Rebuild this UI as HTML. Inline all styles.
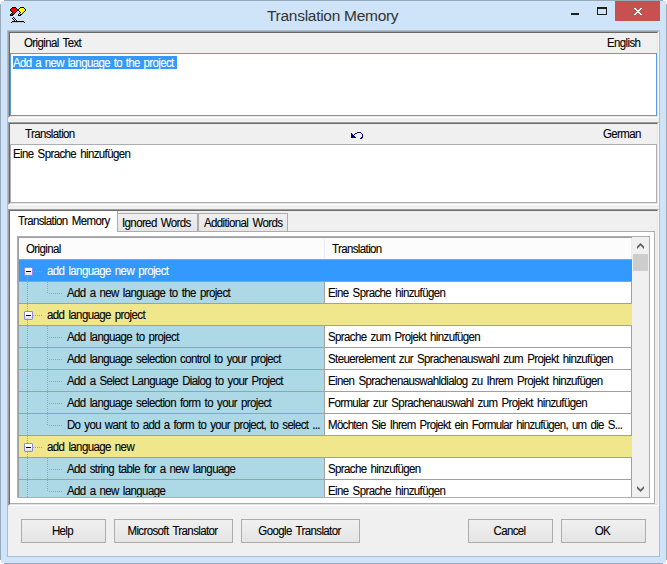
<!DOCTYPE html>
<html><head><meta charset="utf-8">
<style>
*{margin:0;padding:0;box-sizing:border-box}
html,body{width:667px;height:564px;overflow:hidden;background:#fff}
body{position:relative;font-family:"Liberation Sans",sans-serif;font-size:11.5px;color:#000;letter-spacing:-0.62px;word-spacing:1.5px;-webkit-text-stroke:0.1px currentColor}
.a{position:absolute}
.t{position:absolute;white-space:nowrap;line-height:13px;transform:scaleY(1.08);transform-origin:0 10.4px}
.sunk{position:absolute;border-top:1px solid #a0a0a0;border-left:1px solid #a0a0a0;border-bottom:1px solid #fff;border-right:1px solid #fff}
.sunk>.in{position:absolute;left:0;top:0;right:0;bottom:0;border-top:1px solid #696969;border-left:1px solid #696969;border-bottom:1px solid #e3e3e3;border-right:1px solid #e3e3e3}
.btn{position:absolute;top:519px;height:24px;border:1px solid #acacac;background:linear-gradient(#f0f0f0,#e5e5e5);text-align:center;line-height:22px;padding-right:2px}
.btn span{display:inline-block;transform:scaleY(1.08);transform-origin:0 75%}
.gl{height:1px;background:#a0a0a0}
.dv{width:1px;background:repeating-linear-gradient(#a0a0a0 0 1px,transparent 1px 2px)}
.dh{height:1px;background:repeating-linear-gradient(90deg,#a0a0a0 0 1px,transparent 1px 2px)}
.box{width:9px;height:9px;border:1px solid #8a8ade;border-radius:1px;background:linear-gradient(#fff 30%,#dcdcdc)}
.box i{position:absolute;left:1px;top:3px;width:5px;height:1px;background:#000}
</style></head><body>
<!-- window frame -->
<div class="a" style="left:1px;top:1px;width:665px;height:562px;background:#cfe4f8"></div>
<div class="a" style="left:4px;top:0;width:659px;height:1px;background:#98aab9"></div>
<div class="a" style="left:4px;top:563px;width:659px;height:1px;background:#98aab9"></div>
<div class="a" style="left:0;top:4px;width:1px;height:556px;background:#98aab9"></div>
<div class="a" style="left:666px;top:4px;width:1px;height:556px;background:#98aab9"></div>
<div class="a" style="left:7px;top:30px;width:653px;height:527px;border:1px solid #a9bed3"></div>
<div class="a" style="left:8px;top:31px;width:651px;height:525px;background:#f0f0f0"></div>

<!-- title bar -->
<svg class="a" style="left:8px;top:5px" width="20" height="20" shape-rendering="crispEdges"><rect x="4" y="2" width="4" height="1" fill="#000"/><rect x="12" y="2" width="4" height="1" fill="#000"/><rect x="3" y="3" width="1" height="1" fill="#000"/><rect x="4" y="3" width="4" height="1" fill="#f00"/><rect x="8" y="3" width="1" height="1" fill="#000"/><rect x="11" y="3" width="1" height="1" fill="#000"/><rect x="12" y="3" width="4" height="1" fill="#ff0"/><rect x="16" y="3" width="1" height="1" fill="#000"/><rect x="2" y="4" width="1" height="1" fill="#000"/><rect x="3" y="4" width="6" height="1" fill="#f00"/><rect x="9" y="4" width="2" height="1" fill="#000"/><rect x="11" y="4" width="6" height="1" fill="#ff0"/><rect x="17" y="4" width="1" height="1" fill="#000"/><rect x="2" y="5" width="1" height="1" fill="#000"/><rect x="3" y="5" width="6" height="1" fill="#f00"/><rect x="9" y="5" width="2" height="1" fill="#000"/><rect x="11" y="5" width="6" height="1" fill="#ff0"/><rect x="17" y="5" width="1" height="1" fill="#000"/><rect x="3" y="6" width="1" height="1" fill="#000"/><rect x="4" y="6" width="4" height="1" fill="#f00"/><rect x="8" y="6" width="1" height="1" fill="#000"/><rect x="11" y="6" width="1" height="1" fill="#000"/><rect x="12" y="6" width="4" height="1" fill="#ff0"/><rect x="16" y="6" width="1" height="1" fill="#000"/><rect x="4" y="7" width="1" height="1" fill="#000"/><rect x="5" y="7" width="2" height="1" fill="#f00"/><rect x="7" y="7" width="1" height="1" fill="#000"/><rect x="12" y="7" width="1" height="1" fill="#000"/><rect x="13" y="7" width="2" height="1" fill="#ff0"/><rect x="15" y="7" width="1" height="1" fill="#000"/><rect x="3" y="8" width="1" height="1" fill="#000"/><rect x="4" y="8" width="2" height="1" fill="#f00"/><rect x="6" y="8" width="1" height="1" fill="#000"/><rect x="11" y="8" width="1" height="1" fill="#000"/><rect x="12" y="8" width="2" height="1" fill="#ff0"/><rect x="14" y="8" width="1" height="1" fill="#000"/><rect x="2" y="9" width="1" height="1" fill="#000"/><rect x="3" y="9" width="1" height="1" fill="#f00"/><rect x="4" y="9" width="2" height="1" fill="#000"/><rect x="10" y="9" width="1" height="1" fill="#000"/><rect x="11" y="9" width="1" height="1" fill="#ff0"/><rect x="12" y="9" width="2" height="1" fill="#000"/><rect x="2" y="10" width="3" height="1" fill="#000"/><rect x="10" y="10" width="3" height="1" fill="#000"/><rect x="5" y="12" width="1" height="1" fill="#000"/><rect x="4" y="13" width="1" height="1" fill="#000"/><rect x="5" y="13" width="1" height="1" fill="#fff"/><rect x="6" y="13" width="1" height="1" fill="#000"/><rect x="5" y="14" width="1" height="1" fill="#000"/><rect x="6" y="14" width="1" height="1" fill="#fff"/><rect x="7" y="14" width="1" height="1" fill="#000"/><rect x="6" y="15" width="1" height="1" fill="#000"/><rect x="7" y="15" width="1" height="1" fill="#fff"/><rect x="8" y="15" width="1" height="1" fill="#000"/><rect x="4" y="16" width="12" height="1" fill="#000"/><rect x="3" y="17" width="1" height="1" fill="#000"/><rect x="4" y="17" width="12" height="1" fill="#c8c8c8"/><rect x="16" y="17" width="1" height="1" fill="#000"/></svg>
<div class="t" style="left:267px;top:6px;font-size:15.5px;line-height:20px;color:#333;letter-spacing:-0.28px;word-spacing:0;-webkit-text-stroke:0;transform:none">Translation Memory</div>
<div class="a" style="left:571px;top:13px;width:8px;height:2px;background:#1e1e1e"></div>
<div class="a" style="left:597px;top:7px;width:10px;height:8px;border:1px solid #1e1e1e;border-top-width:2px"></div>
<div class="a" style="left:615px;top:1px;width:45px;height:20px;background:#c75050"></div>
<svg class="a" style="left:634px;top:8px" width="8" height="7" fill="#fff" shape-rendering="crispEdges"><rect x="0" y="0" width="2" height="1"/><rect x="6" y="0" width="2" height="1"/><rect x="1" y="1" width="2" height="1"/><rect x="5" y="1" width="2" height="1"/><rect x="2" y="2" width="4" height="1"/><rect x="3" y="3" width="2" height="1"/><rect x="2" y="4" width="4" height="1"/><rect x="1" y="5" width="2" height="1"/><rect x="5" y="5" width="2" height="1"/><rect x="0" y="6" width="2" height="1"/><rect x="6" y="6" width="2" height="1"/></svg>

<!-- panel 1 -->
<div class="sunk" style="left:8px;top:31px;width:651px;height:87px"><div class="in"></div></div>
<div class="t" style="left:24px;top:37px">Original Text</div>
<div class="t" style="left:607px;top:37px">English</div>
<div class="a" style="left:10px;top:53px;width:647px;height:63px;background:#fff;border:1px solid #569de5"></div>
<div class="a" style="left:13px;top:56px;width:164px;height:13px;background:#3399ff"></div>
<div class="t" style="left:13px;top:57px;color:#fff;word-spacing:1.1px">Add a new language to the project</div>

<!-- panel 2 -->
<div class="sunk" style="left:8px;top:122px;width:651px;height:83px"><div class="in"></div></div>
<div class="t" style="left:25px;top:128px">Translation</div>
<div class="t" style="left:603px;top:128px">German</div>
<svg class="a" style="left:350px;top:131px" width="14" height="9" fill="#00007f" shape-rendering="crispEdges"><rect x="7" y="1" width="4" height="1"/><rect x="1" y="2" width="1" height="1"/><rect x="5" y="2" width="2" height="1"/><rect x="11" y="2" width="1" height="1"/><rect x="1" y="3" width="2" height="1"/><rect x="4" y="3" width="1" height="1"/><rect x="12" y="3" width="1" height="1"/><rect x="1" y="4" width="3" height="1"/><rect x="12" y="4" width="1" height="1"/><rect x="1" y="5" width="4" height="1"/><rect x="12" y="5" width="1" height="1"/><rect x="1" y="6" width="5" height="1"/><rect x="11" y="6" width="2" height="1"/><rect x="10" y="7" width="2" height="1"/></svg>
<div class="a" style="left:10px;top:144px;width:647px;height:59px;background:#fff;border:1px solid #abadb3"></div>
<div class="t" style="left:13px;top:148px">Eine Sprache hinzufügen</div>

<!-- panel 3 -->
<div class="sunk" style="left:8px;top:209px;width:651px;height:297px"><div class="in"></div></div>
<div class="a" style="left:10px;top:231px;width:645px;height:273px;background:#fff;border:1px solid #acacac;border-left:none"></div>
<div class="a" style="left:10px;top:211px;width:108px;height:21px;background:#fff;border-right:1px solid #acacac"></div>
<div class="a" style="left:117px;top:213px;width:81px;height:19px;background:linear-gradient(#f0f0f0,#e5e5e5);border:1px solid #acacac"></div>
<div class="a" style="left:198px;top:213px;width:90px;height:19px;background:linear-gradient(#f0f0f0,#e5e5e5);border:1px solid #acacac"></div>
<div class="t" style="left:18px;top:215px">Translation Memory</div>
<div class="t" style="left:122px;top:217px">Ignored Words</div>
<div class="t" style="left:204px;top:217px">Additional Words</div>

<!-- listview -->
<div class="a" style="left:17px;top:236px;width:633px;height:262px;background:#fff;border:1px solid #abadb3"></div>
<div class="a" style="left:18px;top:237px;width:1px;height:260px;background:#a0a0a0"></div>
<div class="a" style="left:18px;top:237px;width:614px;height:1px;background:#a0a0a0"></div>
<div class="a" style="left:19px;top:238px;width:613px;height:21px;background:#fcfcfc"></div>
<div class="a" style="left:324px;top:239px;width:1px;height:19px;background:#e6edf7"></div>
<div class="a gl" style="left:19px;top:259px;width:613px"></div>
<div class="a" style="left:631px;top:238px;width:1px;height:21px;background:#e6edf7"></div>
<div class="t" style="left:26px;top:243px">Original</div>
<div class="t" style="left:332px;top:243px">Translation</div>
<div class="a" style="left:19px;top:238px;width:613px;height:259px;overflow:hidden">
<div class="a" style="left:-19px;top:-238px;width:667px;height:564px">
<div class="a" style="left:19px;top:260px;width:613px;height:21px;background:#3399ff"></div>
<div class="a gl" style="left:19px;top:281px;width:613px"></div>
<div class="a dv" style="left:27px;top:276px;height:6px"></div>
<div class="a dh" style="left:33px;top:271px;width:9px"></div>
<div class="a box" style="left:24px;top:267px"><i></i></div>
<div class="t" style="left:47px;top:265px;color:#fff">add language new project</div>
<div class="a" style="left:19px;top:282px;width:305px;height:21px;background:#add8e6"></div>
<div class="a" style="left:325px;top:282px;width:306px;height:21px;background:#fff"></div>
<div class="a gl" style="left:19px;top:303px;width:613px"></div>
<div class="a" style="left:324px;top:282px;width:1px;height:21px;background:#a0a0a0"></div>
<div class="a" style="left:631px;top:282px;width:1px;height:21px;background:#a0a0a0"></div>
<div class="a dv" style="left:27px;top:282px;height:22px"></div>
<div class="a dv" style="left:47px;top:282px;height:12px"></div>
<div class="a dh" style="left:49px;top:293px;width:13px"></div>
<div class="t" style="left:67px;top:287px">Add a new language to the project</div>
<div class="t" style="left:328px;top:287px">Eine Sprache hinzufügen</div>
<div class="a" style="left:19px;top:304px;width:613px;height:21px;background:#f0e68c"></div>
<div class="a gl" style="left:19px;top:325px;width:613px"></div>
<div class="a dv" style="left:27px;top:304px;height:7px"></div>
<div class="a dv" style="left:27px;top:320px;height:6px"></div>
<div class="a dh" style="left:33px;top:315px;width:9px"></div>
<div class="a box" style="left:24px;top:311px"><i></i></div>
<div class="t" style="left:47px;top:309px;color:#000">add language project</div>
<div class="a" style="left:19px;top:326px;width:305px;height:21px;background:#add8e6"></div>
<div class="a" style="left:325px;top:326px;width:306px;height:21px;background:#fff"></div>
<div class="a gl" style="left:19px;top:347px;width:613px"></div>
<div class="a" style="left:324px;top:326px;width:1px;height:21px;background:#a0a0a0"></div>
<div class="a" style="left:631px;top:326px;width:1px;height:21px;background:#a0a0a0"></div>
<div class="a dv" style="left:27px;top:326px;height:22px"></div>
<div class="a dv" style="left:47px;top:326px;height:22px"></div>
<div class="a dh" style="left:49px;top:337px;width:13px"></div>
<div class="t" style="left:67px;top:331px">Add language to project</div>
<div class="t" style="left:328px;top:331px">Sprache zum Projekt hinzufügen</div>
<div class="a" style="left:19px;top:348px;width:305px;height:21px;background:#add8e6"></div>
<div class="a" style="left:325px;top:348px;width:306px;height:21px;background:#fff"></div>
<div class="a gl" style="left:19px;top:369px;width:613px"></div>
<div class="a" style="left:324px;top:348px;width:1px;height:21px;background:#a0a0a0"></div>
<div class="a" style="left:631px;top:348px;width:1px;height:21px;background:#a0a0a0"></div>
<div class="a dv" style="left:27px;top:348px;height:22px"></div>
<div class="a dv" style="left:47px;top:348px;height:22px"></div>
<div class="a dh" style="left:49px;top:359px;width:13px"></div>
<div class="t" style="left:67px;top:353px">Add language selection control to your project</div>
<div class="t" style="left:328px;top:353px">Steuerelement zur Sprachenauswahl zum Projekt hinzufügen</div>
<div class="a" style="left:19px;top:370px;width:305px;height:21px;background:#add8e6"></div>
<div class="a" style="left:325px;top:370px;width:306px;height:21px;background:#fff"></div>
<div class="a gl" style="left:19px;top:391px;width:613px"></div>
<div class="a" style="left:324px;top:370px;width:1px;height:21px;background:#a0a0a0"></div>
<div class="a" style="left:631px;top:370px;width:1px;height:21px;background:#a0a0a0"></div>
<div class="a dv" style="left:27px;top:370px;height:22px"></div>
<div class="a dv" style="left:47px;top:370px;height:22px"></div>
<div class="a dh" style="left:49px;top:381px;width:13px"></div>
<div class="t" style="left:67px;top:375px">Add a Select Language Dialog to your Project</div>
<div class="t" style="left:328px;top:375px">Einen Sprachenauswahldialog zu Ihrem Projekt hinzufügen</div>
<div class="a" style="left:19px;top:392px;width:305px;height:21px;background:#add8e6"></div>
<div class="a" style="left:325px;top:392px;width:306px;height:21px;background:#fff"></div>
<div class="a gl" style="left:19px;top:413px;width:613px"></div>
<div class="a" style="left:324px;top:392px;width:1px;height:21px;background:#a0a0a0"></div>
<div class="a" style="left:631px;top:392px;width:1px;height:21px;background:#a0a0a0"></div>
<div class="a dv" style="left:27px;top:392px;height:22px"></div>
<div class="a dv" style="left:47px;top:392px;height:22px"></div>
<div class="a dh" style="left:49px;top:403px;width:13px"></div>
<div class="t" style="left:67px;top:397px">Add language selection form to your project</div>
<div class="t" style="left:328px;top:397px">Formular zur Sprachenauswahl zum Projekt hinzufügen</div>
<div class="a" style="left:19px;top:414px;width:305px;height:21px;background:#add8e6"></div>
<div class="a" style="left:325px;top:414px;width:306px;height:21px;background:#fff"></div>
<div class="a gl" style="left:19px;top:435px;width:613px"></div>
<div class="a" style="left:324px;top:414px;width:1px;height:21px;background:#a0a0a0"></div>
<div class="a" style="left:631px;top:414px;width:1px;height:21px;background:#a0a0a0"></div>
<div class="a dv" style="left:27px;top:414px;height:22px"></div>
<div class="a dv" style="left:47px;top:414px;height:12px"></div>
<div class="a dh" style="left:49px;top:425px;width:13px"></div>
<div class="t" style="left:67px;top:419px;letter-spacing:-0.68px">Do you want to add a form to your project, to select ...</div>
<div class="t" style="left:328px;top:419px;letter-spacing:-0.7px">Möchten Sie Ihrem Projekt ein Formular hinzufügen, um die S...</div>
<div class="a" style="left:19px;top:436px;width:613px;height:21px;background:#f0e68c"></div>
<div class="a gl" style="left:19px;top:457px;width:613px"></div>
<div class="a dv" style="left:27px;top:436px;height:7px"></div>
<div class="a dv" style="left:27px;top:452px;height:6px"></div>
<div class="a dh" style="left:33px;top:447px;width:9px"></div>
<div class="a box" style="left:24px;top:443px"><i></i></div>
<div class="t" style="left:47px;top:441px;color:#000">add language new</div>
<div class="a" style="left:19px;top:458px;width:305px;height:21px;background:#add8e6"></div>
<div class="a" style="left:325px;top:458px;width:306px;height:21px;background:#fff"></div>
<div class="a gl" style="left:19px;top:479px;width:613px"></div>
<div class="a" style="left:324px;top:458px;width:1px;height:21px;background:#a0a0a0"></div>
<div class="a" style="left:631px;top:458px;width:1px;height:21px;background:#a0a0a0"></div>
<div class="a dv" style="left:27px;top:458px;height:22px"></div>
<div class="a dv" style="left:47px;top:458px;height:22px"></div>
<div class="a dh" style="left:49px;top:469px;width:13px"></div>
<div class="t" style="left:67px;top:463px">Add string table for a new language</div>
<div class="t" style="left:328px;top:463px">Sprache hinzufügen</div>
<div class="a" style="left:19px;top:480px;width:305px;height:21px;background:#add8e6"></div>
<div class="a" style="left:325px;top:480px;width:306px;height:21px;background:#fff"></div>
<div class="a gl" style="left:19px;top:501px;width:613px"></div>
<div class="a" style="left:324px;top:480px;width:1px;height:21px;background:#a0a0a0"></div>
<div class="a" style="left:631px;top:480px;width:1px;height:21px;background:#a0a0a0"></div>
<div class="a dv" style="left:27px;top:480px;height:22px"></div>
<div class="a dv" style="left:47px;top:480px;height:12px"></div>
<div class="a dh" style="left:49px;top:491px;width:13px"></div>
<div class="t" style="left:67px;top:485px">Add a new language</div>
<div class="t" style="left:328px;top:485px">Eine Sprache hinzufügen</div>
</div></div>
<!-- scrollbar -->
<div class="a" style="left:632px;top:237px;width:17px;height:260px;background:#f0f0f0"></div>
<div class="a" style="left:633px;top:254px;width:15px;height:17px;background:#cdcdcd"></div>
<svg class="a" style="left:636px;top:242px" width="9" height="8" viewBox="0 0 9 8"><path d="M1 4.6L4.5 0.9L8 4.6L8 7L4.5 3.4L1 7Z" fill="#606060"/></svg>
<svg class="a" style="left:636px;top:485px" width="9" height="8" viewBox="0 0 9 8"><path d="M1 1L4.5 4.6L8 1L8 3.4L4.5 7L1 3.4Z" fill="#606060"/></svg>

<!-- buttons -->
<div class="btn" style="left:21px;width:85px"><span>Help</span></div>
<div class="btn" style="left:114px;width:119px"><span>Microsoft Translator</span></div>
<div class="btn" style="left:241px;width:119px"><span>Google Translator</span></div>
<div class="btn" style="left:468px;width:85px"><span>Cancel</span></div>
<div class="btn" style="left:561px;width:85px"><span>OK</span></div>
</body></html>
